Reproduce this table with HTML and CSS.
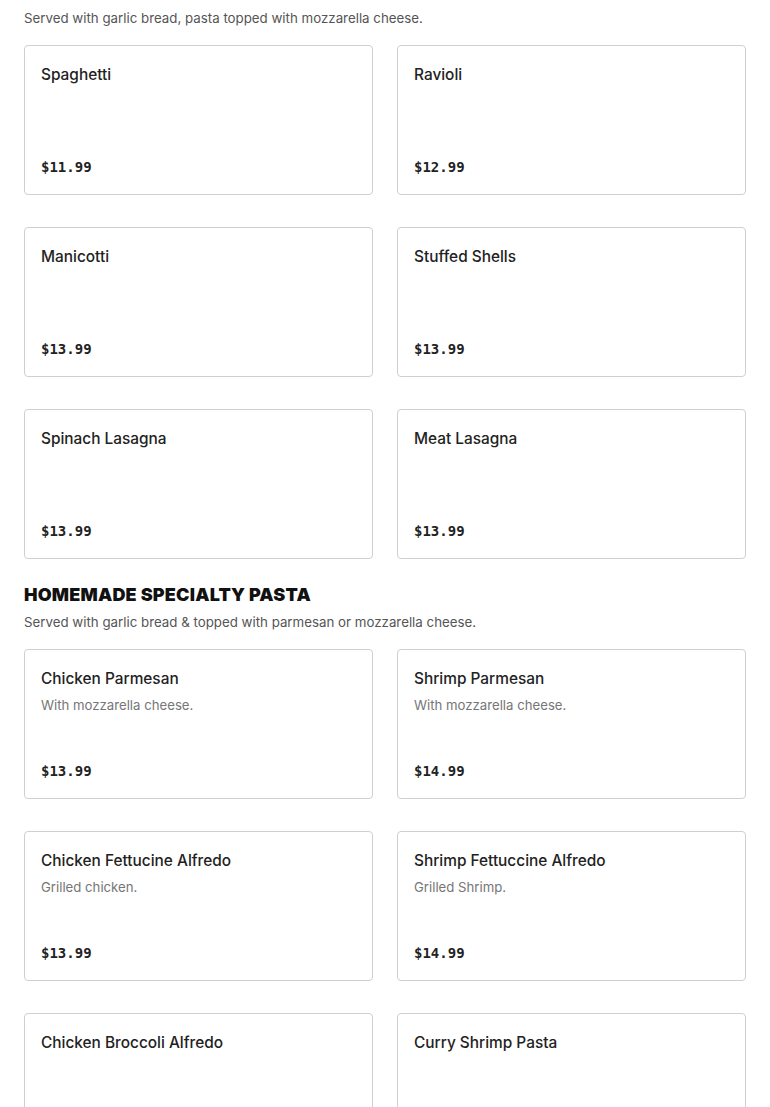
FILE: index.html
```html
<!DOCTYPE html>
<html lang="en">
<head>
<meta charset="utf-8">
<title>Menu</title>
<link rel="stylesheet" href="styles.css">
</head>
<body>
<main class="menu">
  <section class="section">
    <h2 class="section-title">TRADITIONAL PASTA</h2>
    <p class="section-desc">Served with garlic bread, pasta topped with mozzarella cheese.</p>
    <div class="grid">
      <div class="card"><div class="name">Spaghetti</div><div class="price">$11.99</div></div>
      <div class="card"><div class="name">Ravioli</div><div class="price">$12.99</div></div>
      <div class="card"><div class="name">Manicotti</div><div class="price">$13.99</div></div>
      <div class="card"><div class="name">Stuffed Shells</div><div class="price">$13.99</div></div>
      <div class="card"><div class="name">Spinach Lasagna</div><div class="price">$13.99</div></div>
      <div class="card"><div class="name">Meat Lasagna</div><div class="price">$13.99</div></div>
    </div>
  </section>
  <section class="section">
    <h2 class="section-title">HOMEMADE SPECIALTY PASTA</h2>
    <p class="section-desc">Served with garlic bread &amp; topped with parmesan or mozzarella cheese.</p>
    <div class="grid">
      <div class="card"><div class="name">Chicken Parmesan</div><div class="desc">With mozzarella cheese.</div><div class="price">$13.99</div></div>
      <div class="card"><div class="name">Shrimp Parmesan</div><div class="desc">With mozzarella cheese.</div><div class="price">$14.99</div></div>
      <div class="card"><div class="name">Chicken Fettucine Alfredo</div><div class="desc">Grilled chicken.</div><div class="price">$13.99</div></div>
      <div class="card"><div class="name">Shrimp Fettuccine Alfredo</div><div class="desc">Grilled Shrimp.</div><div class="price">$14.99</div></div>
      <div class="card"><div class="name">Chicken Broccoli Alfredo</div><div class="price">$13.99</div></div>
      <div class="card"><div class="name">Curry Shrimp Pasta</div><div class="price">$14.99</div></div>
    </div>
  </section>
</main>
</body>
</html>
```

FILE: styles.css
```css
* { box-sizing: border-box; }
html, body { margin: 0; padding: 0; background: #fff; }
body {
  font-family: Inter, "Liberation Sans", Arial, sans-serif;
  color: #222;
  overflow: hidden;
}
.menu {
  padding: 0 24px;
  margin-top: -22px;
}
.section { margin-bottom: 23px; }
.section-title {
  margin: 0;
  padding-top: 1px;
  font-family: Inter, "Liberation Sans", Arial, sans-serif;
  font-weight: 900;
  font-size: 18px;
  line-height: 24px;
  letter-spacing: 0.2px;
  color: #111;
}
.section-desc {
  margin: 5px 0 0;
  font-size: 13.3px;
  line-height: 20px;
  color: #555;
}
.grid {
  margin-top: 17px;
  display: grid;
  grid-template-columns: 1fr 1fr;
  column-gap: 24px;
  row-gap: 32px;
}
.card {
  display: flex;
  flex-direction: column;
  height: 150px;
  padding: 17px 16px 16px;
  border: 1px solid #cfcfcf;
  border-radius: 4px;
  background: #fff;
}
.name {
  font-size: 15.4px;
  line-height: 24px;
  font-weight: 500;
  color: #222;
}
.desc {
  margin-top: 3px;
  font-size: 13.2px;
  line-height: 22px;
  color: #767676;
}
.price {
  margin-top: auto;
  font-family: "DejaVu Sans Mono", "Liberation Mono", monospace;
  font-weight: 700;
  font-size: 14px;
  line-height: 22px;
  color: #222;
}
```
